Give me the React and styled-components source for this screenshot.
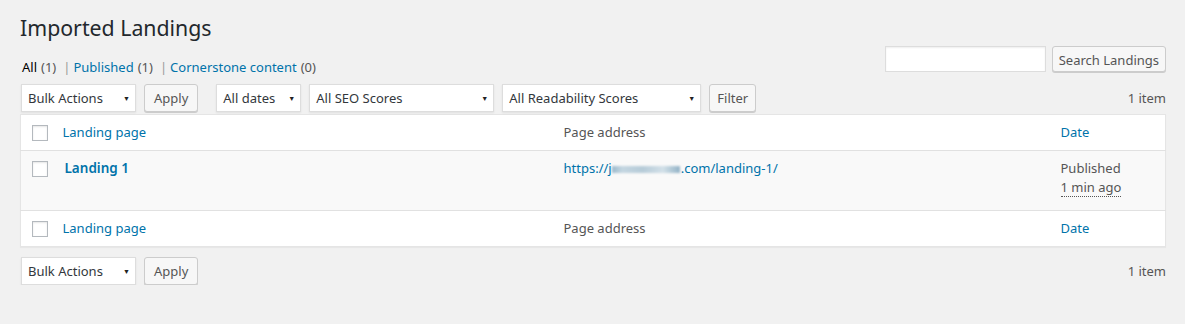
import React from 'react'
import styled, { createGlobalStyle } from 'styled-components'

const GlobalStyle = createGlobalStyle`
  html, body {
    margin: 0;
    padding: 0;
    background: #f1f1f1;
  }
  body {
    font-family: "Segoe UI", "Noto Sans", sans-serif;
    font-size: 13px;
    color: #444;
  }
`

const Wrap = styled.div`
  padding: 2px 19px 0 20px;
  width: 1146px;
`

const Title = styled.h1`
  font-size: 21.3px;
  font-weight: 400;
  color: #23282d;
  margin: 0;
  padding: 11px 0 4px;
  line-height: 29px;
`

const TopBar = styled.div`
  display: flex;
  justify-content: space-between;
  align-items: flex-start;
`

const Views = styled.ul`
  list-style: none;
  margin: 8px 0 0 2px;
  padding: 0;
  display: flex;
  color: #666;
  line-height: 2;
  li {
    display: flex;
    gap: 4px;
  }
  .sep {
    margin: 0 3px;
    color: #999;
  }
`

const ViewLink = styled.a`
  color: ${p => (p.$current ? '#000' : '#0073aa')};
  text-decoration: none;
`

const Count = styled.span`
  color: #555;
`

const SearchBox = styled.div`
  display: flex;
  gap: 6px;
`

const SearchInput = styled.input`
  width: 161px;
  height: 26px;
  box-sizing: border-box;
  border: 1px solid #ddd;
  background: #fff;
  box-shadow: inset 0 1px 2px rgba(0, 0, 0, 0.07);
`

const Button = styled.button`
  font-family: inherit;
  font-size: 13px;
  color: #555;
  background: #f7f7f7;
  border: 1px solid #ccc;
  border-radius: 3px;
  box-shadow: 0 1px 0 #ccc;
  height: ${p => p.$h || 28}px;
  padding: 0 ${p => p.$px || 9}px 1px;
  line-height: 26px;
  cursor: pointer;
`

const NavBar = styled.div`
  display: flex;
  align-items: center;
  height: 28px;
  margin: ${p => (p.$top ? '4px 0 2px 1px' : '10px 0 0 1px')};
`

const Actions = styled.div`
  display: flex;
  align-items: center;
  gap: 8px;
  margin-right: ${p => p.$gap || 0}px;
`

const SelectBox = styled.div`
  position: relative;
  width: ${p => p.$w}px;
  height: 28px;
  box-sizing: border-box;
  border: 1px solid #ddd;
  background: #fff;
  box-shadow: 0 1px 2px rgba(0, 0, 0, 0.07);
  color: #32373c;
  padding: 0 0 0 6px;
  line-height: 27px;
  &::after {
    content: '▼';
    position: absolute;
    right: 5px;
    top: 0;
    font-size: 7px;
    color: #222;
  }
`

const ItemCount = styled.div`
  margin-left: auto;
  color: #555;
`

const Table = styled.table`
  width: 100%;
  border-collapse: collapse;
  background: #fff;
  border: 1px solid #e5e5e5;
  box-shadow: 0 1px 1px rgba(0, 0, 0, 0.04);
  table-layout: fixed;
`

const Cell = styled.td`
  padding: 8px 10px;
  vertical-align: top;
  text-align: left;
  line-height: 19px;
  color: #555;
`

const HeadCell = styled(Cell).attrs({ as: 'th' })`
  font-weight: 400;
`

const Row = styled.tr`
  background: ${p => (p.$alt ? '#f9f9f9' : '#fff')};
  border-top: ${p => (p.$line ? '1px solid #e1e1e1' : 'none')};
  height: ${p => p.$h}px;
`

const Check = styled.span`
  display: block;
  width: 16px;
  height: 16px;
  box-sizing: border-box;
  border: 1px solid #b4b9be;
  background: #fff;
  box-shadow: inset 0 1px 2px rgba(0, 0, 0, 0.1);
  margin: 2px 0 0 1px;
`

const SortLink = styled.a`
  color: #0073aa;
  text-decoration: none;
`

const RowTitle = styled.a`
  color: #0073aa;
  font-weight: 600;
  font-size: 13.5px;
  text-decoration: none;
  margin-left: 2px;
`

const Address = styled.a`
  color: #0073aa;
  text-decoration: none;
  display: inline-flex;
  align-items: center;
`

const Blur = styled.span`
  display: inline-block;
  width: 68px;
  height: 7px;
  margin: 2px 1px 0 0;
  background: linear-gradient(90deg, #9cb9cc, #c4d6e1 15%, #b6cbd8 45%, #d2e0e8 75%, #93b3c7);
  filter: blur(1.2px);
`

const Ago = styled.abbr`
  text-decoration: none;
  border-bottom: 1px dotted #555;
`

function Select({ w, children }) {
  return <SelectBox $w={w}>{children}</SelectBox>
}

function HeadRow({ line }) {
  return (
    <Row $h={35} $line={line}>
      <HeadCell><Check /></HeadCell>
      <HeadCell><SortLink href="#">Landing page</SortLink></HeadCell>
      <HeadCell>Page address</HeadCell>
      <HeadCell><SortLink href="#">Date</SortLink></HeadCell>
    </Row>
  )
}

export default function App() {
  return (
    <>
      <GlobalStyle />
      <Wrap>
        <Title>Imported Landings</Title>
        <TopBar>
          <Views>
            <li><ViewLink $current href="#">All</ViewLink><Count>(1)</Count><span className="sep">|</span></li>
            <li><ViewLink href="#">Published</ViewLink><Count>(1)</Count><span className="sep">|</span></li>
            <li><ViewLink href="#">Cornerstone content</ViewLink><Count>(0)</Count></li>
          </Views>
          <SearchBox>
            <SearchInput type="search" />
            <Button $h={26} $px={6}>Search Landings</Button>
          </SearchBox>
        </TopBar>

        <NavBar $top>
          <Actions $gap={18}>
            <Select w={115}>Bulk Actions</Select>
            <Button>Apply</Button>
          </Actions>
          <Actions>
            <Select w={85}>All dates</Select>
            <Select w={185}>All SEO Scores</Select>
            <Select w={199}>All Readability Scores</Select>
            <Button $px={7}>Filter</Button>
          </Actions>
          <ItemCount>1 item</ItemCount>
        </NavBar>

        <Table>
          <colgroup>
            <col style={{ width: 32 }} />
            <col style={{ width: 501 }} />
            <col style={{ width: 497 }} />
            <col />
          </colgroup>
          <thead>
            <HeadRow />
          </thead>
          <tbody>
            <Row $alt $line $h={60}>
              <Cell><Check /></Cell>
              <Cell><RowTitle href="#">Landing 1</RowTitle></Cell>
              <Cell>
                <Address href="#">https://j<Blur />.com/landing-1/</Address>
              </Cell>
              <Cell>
                Published<br />
                <Ago title="1 min ago">1 min ago</Ago>
              </Cell>
            </Row>
          </tbody>
          <tfoot>
            <HeadRow line />
          </tfoot>
        </Table>

        <NavBar>
          <Actions>
            <Select w={115}>Bulk Actions</Select>
            <Button>Apply</Button>
          </Actions>
          <ItemCount>1 item</ItemCount>
        </NavBar>
      </Wrap>
    </>
  )
}
